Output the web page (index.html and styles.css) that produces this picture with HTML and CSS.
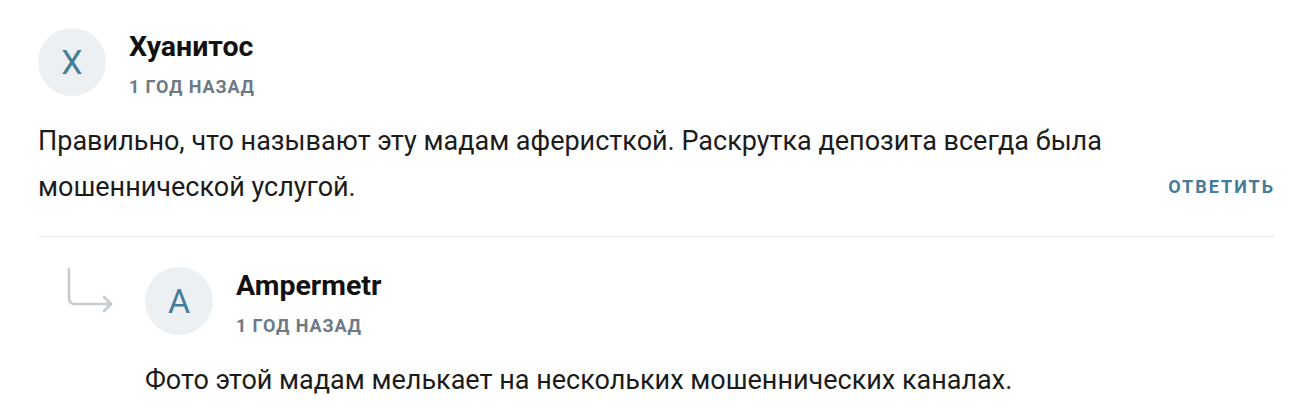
FILE: index.html
```html
<!DOCTYPE html>
<html lang="ru">
<head>
<meta charset="utf-8">
<title>Комментарии</title>
<link rel="stylesheet" href="styles.css">
</head>
<body>
<div class="comments">
  <div class="comment">
    <div class="comment-head">
      <div class="avatar">Х</div>
      <div class="meta">
        <div class="name">Хуанитос</div>
        <div class="time">1 год назад</div>
      </div>
    </div>
    <div class="comment-foot">
      <p class="text">Правильно, что называют эту мадам аферисткой. Раскрутка депозита всегда была мошеннической услугой.</p>
      <a class="reply-btn" href="#">Ответить</a>
    </div>
  </div>
  <div class="divider"></div>
  <div class="reply">
    <div class="reply-icon">
      <svg width="48" height="48" viewBox="0 0 48 48" fill="none" stroke="#c6cbd0" stroke-width="2.6" stroke-linecap="round" stroke-linejoin="round">
        <path d="M3 2 V31 Q3 37 9 37 H45"/>
        <path d="M38 30 L45 37 L38 44"/>
      </svg>
    </div>
    <div class="comment">
      <div class="comment-head">
        <div class="avatar">A</div>
        <div class="meta">
          <div class="name">Ampermetr</div>
          <div class="time">1 год назад</div>
        </div>
      </div>
      <p class="text">Фото этой мадам мелькает на нескольких мошеннических каналах.</p>
    </div>
  </div>
</div>
</body>
</html>
```
FILE: styles.css
```css
* { box-sizing: border-box; }
html, body { margin: 0; padding: 0; background: #fff; }
body {
  font-family: Roboto, "Liberation Sans", Arial, sans-serif;
  color: #1b1b1b;
}
.comments {
  padding: 28px 38px 0 38px;
}
.comment-head {
  display: flex;
  align-items: flex-start;
  gap: 23px;
}
.avatar {
  width: 68px;
  height: 68px;
  border-radius: 50%;
  background: #edf0f3;
  color: #447d99;
  font-size: 34px;
  display: flex;
  align-items: center;
  justify-content: center;
  flex-shrink: 0;
}
.meta {
  padding-top: 2px;
}
.name {
  font-size: 28.5px;
  font-weight: 700;
  line-height: 34px;
  color: #111;
}
.time {
  margin-top: 11px;
  font-size: 18px;
  font-weight: 700;
  letter-spacing: 0.9px;
  text-transform: uppercase;
  color: #6d7a86;
  line-height: 24px;
}
.text {
  margin: 19px 0 0 0;
  font-size: 27px;
  line-height: 46px;
  color: #1b1b1b;
}
.comment-foot {
  display: flex;
  align-items: flex-end;
  justify-content: space-between;
  gap: 40px;
}
.comment-foot .text {
  max-width: 1110px;
}
.reply-btn {
  font-size: 18px;
  font-weight: 700;
  letter-spacing: 2px;
  text-transform: uppercase;
  color: #457b98;
  text-decoration: none;
  line-height: 46px;
  white-space: nowrap;
}
.divider {
  height: 1px;
  background: #ebebeb;
  margin-top: 26px;
}
.reply {
  display: flex;
  align-items: flex-start;
  padding-top: 30px;
}
.reply-icon {
  margin-left: 28px;
  width: 79px;
  flex-shrink: 0;
}
.reply-icon svg { display: block; }
```
